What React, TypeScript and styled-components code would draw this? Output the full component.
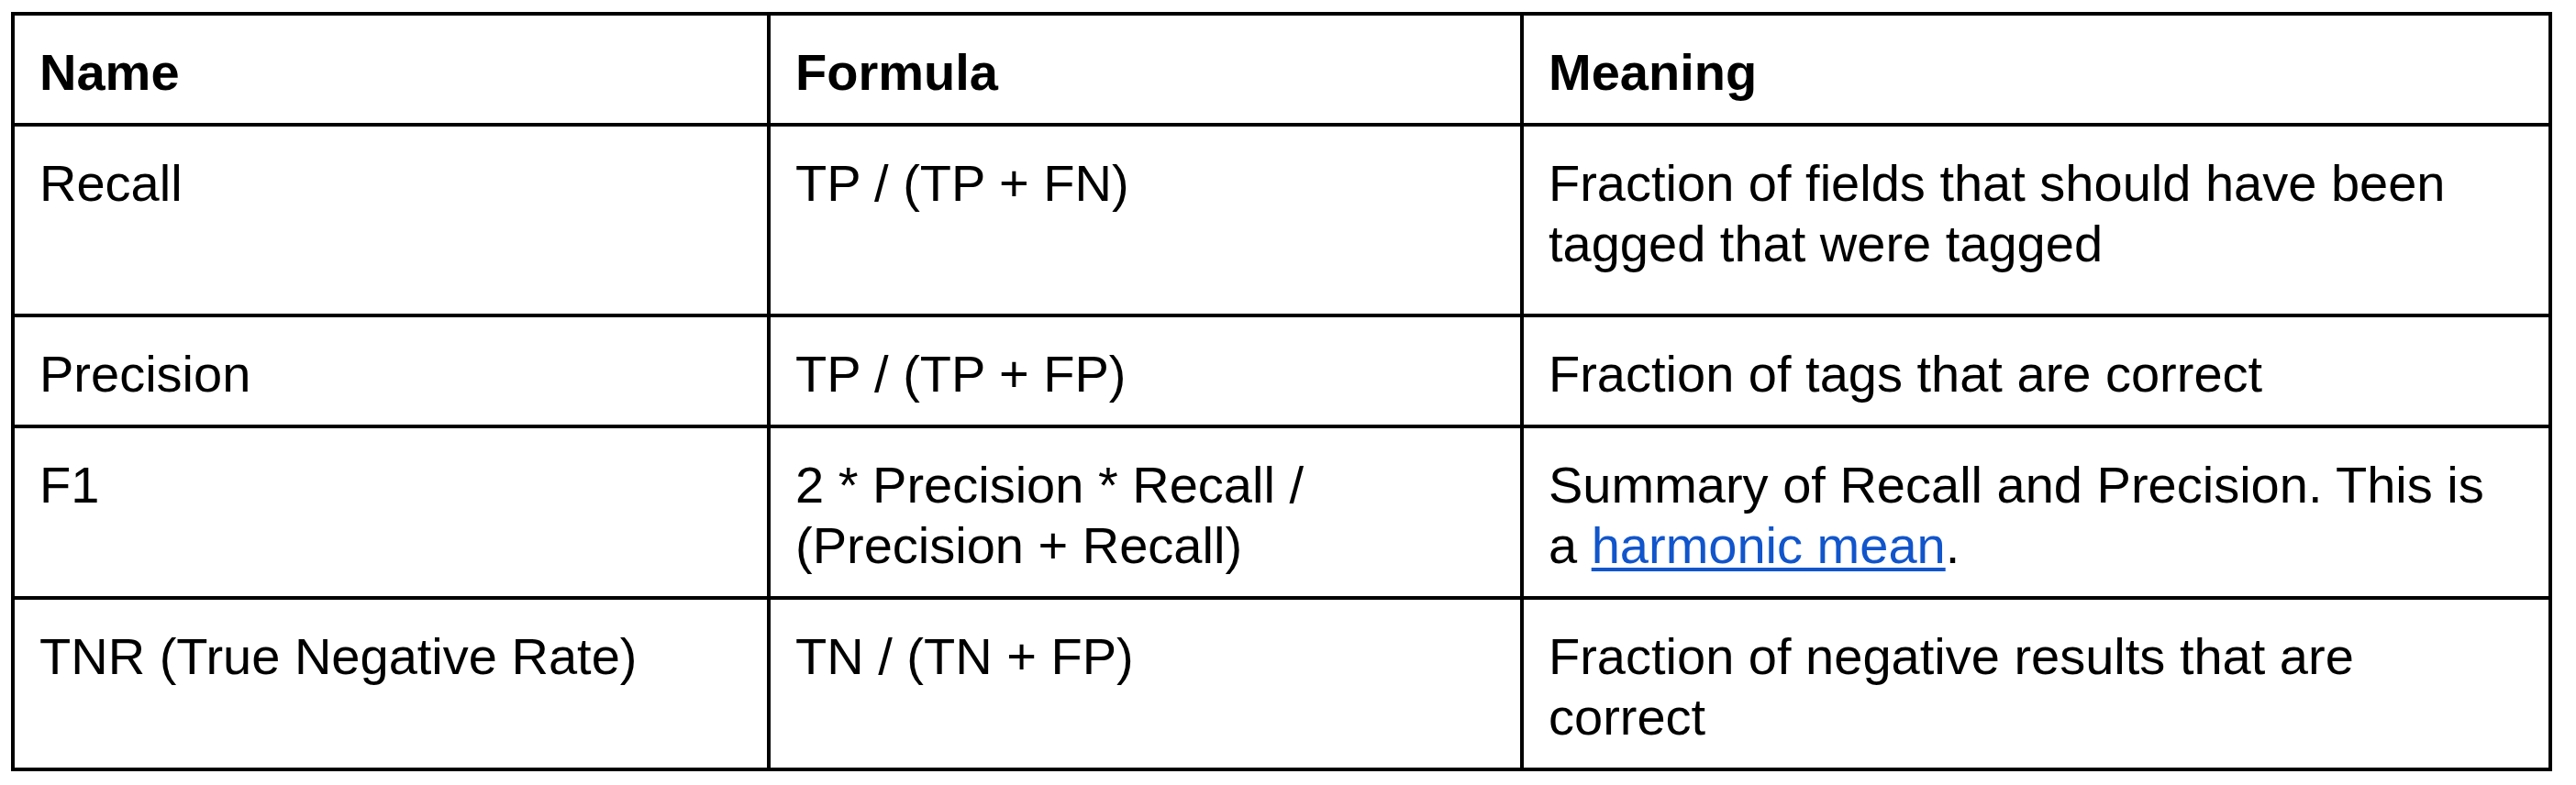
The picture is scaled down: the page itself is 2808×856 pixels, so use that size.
import type { ReactNode } from "react";
import styled, { createGlobalStyle } from "styled-components";

const GlobalStyle = createGlobalStyle`
  html, body {
    margin: 0;
    padding: 0;
    background: #ffffff;
  }
  body {
    font-family: "Liberation Sans", Arial, sans-serif;
    color: #000000;
  }
`;

const Table = styled.div`
  display: grid;
  grid-template-columns: 824px 821px 1121px;
  width: max-content;
  margin: 13px 0 0 12px;
  border-left: 4px solid #000;
  border-top: 4px solid #000;
`;

const Cell = styled.div<{ $head?: boolean; $tall?: boolean; $wide?: boolean }>`
  border-right: 4px solid #000;
  border-bottom: 4px solid #000;
  padding: 29px ${(p) => (p.$wide ? "40px" : "27px")}
    ${(p) => (p.$tall ? "43px" : "22px")} 27px;
  font-size: 56px;
  line-height: 66px;
  font-weight: ${(p) => (p.$head ? 700 : 400)};
`;

const Link = styled.a`
  color: #1155cc;
  text-decoration: underline;
  text-decoration-thickness: 4px;
  text-underline-offset: 5px;
`;

type Row = {
  name: string;
  formula: ReactNode;
  meaning: ReactNode;
  tall?: boolean;
};

const rows: Row[] = [
  {
    name: "Recall",
    formula: "TP / (TP + FN)",
    meaning: "Fraction of fields that should have been tagged that were tagged",
    tall: true,
  },
  {
    name: "Precision",
    formula: "TP / (TP + FP)",
    meaning: "Fraction of tags that are correct",
  },
  {
    name: "F1",
    formula: "2 * Precision * Recall / (Precision + Recall)",
    meaning: (
      <>
        Summary of Recall and Precision. This is a{" "}
        <Link href="#">harmonic mean</Link>.
      </>
    ),
  },
  {
    name: "TNR (True Negative Rate)",
    formula: "TN / (TN + FP)",
    meaning: "Fraction of negative results that are correct",
  },
];

function RowGroup(props: Row) {
  return (
    <>
      <Cell $tall={props.tall}>{props.name}</Cell>
      <Cell $tall={props.tall}>{props.formula}</Cell>
      <Cell $tall={props.tall} $wide>
        {props.meaning}
      </Cell>
    </>
  );
}

export default function App() {
  return (
    <>
      <GlobalStyle />
      <Table>
        <Cell $head>Name</Cell>
        <Cell $head>Formula</Cell>
        <Cell $head $wide>
          Meaning
        </Cell>
        {rows.map((r) => (
          <RowGroup key={r.name} {...r} />
        ))}
      </Table>
    </>
  );
}
